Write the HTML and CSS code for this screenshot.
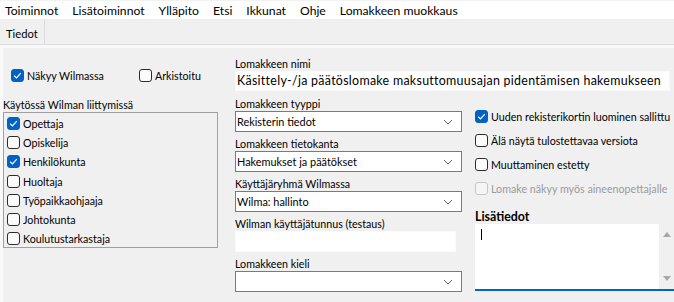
FILE: index.html
```html
<!DOCTYPE html>
<html lang="fi">
<head>
<meta charset="utf-8">
<title>Lomakkeen muokkaus</title>
<link rel="stylesheet" href="styles.css">
</head>
<body>
<div class="menubar">
  <span class="menu-item">Toiminnot</span>
  <span class="menu-item">Lisätoiminnot</span>
  <span class="menu-item">Ylläpito</span>
  <span class="menu-item">Etsi</span>
  <span class="menu-item">Ikkunat</span>
  <span class="menu-item">Ohje</span>
  <span class="menu-item">Lomakkeen muokkaus</span>
</div>
<div class="tabstrip">
  <div class="tab">Tiedot</div>
</div>
<div class="page-wrap">
  <div class="page">
    <div class="col-left">
      <div class="toprow">
        <label class="cb checked nakyy"><span class="box"><svg viewBox="0 0 13 13" width="13" height="13"><polyline points="3.2,6.8 5.5,9 9.8,4.2" fill="none" stroke="#fff" stroke-width="1.2"/></svg></span>Näkyy Wilmassa</label>
        <label class="cb"><span class="box"></span>Arkistoitu</label>
      </div>
      <div class="grouplabel">Käytössä Wilman liittymissä</div>
      <div class="listbox">
        <label class="cb checked"><span class="box"><svg viewBox="0 0 13 13" width="13" height="13"><polyline points="3.2,6.8 5.5,9 9.8,4.2" fill="none" stroke="#fff" stroke-width="1.2"/></svg></span>Opettaja</label>
        <label class="cb"><span class="box"></span>Opiskelija</label>
        <label class="cb checked"><span class="box"><svg viewBox="0 0 13 13" width="13" height="13"><polyline points="3.2,6.8 5.5,9 9.8,4.2" fill="none" stroke="#fff" stroke-width="1.2"/></svg></span>Henkilökunta</label>
        <label class="cb"><span class="box"></span>Huoltaja</label>
        <label class="cb"><span class="box"></span>Työpaikkaohjaaja</label>
        <label class="cb"><span class="box"></span>Johtokunta</label>
        <label class="cb"><span class="box"></span>Koulutustarkastaja</label>
      </div>
    </div>
    <div class="col-main">
      <div class="lbl first">Lomakkeen nimi</div>
      <div class="textinput wide">Käsittely-/ja päätöslomake maksuttomuusajan pidentämisen hakemukseen</div>
      <div class="cols">
        <div class="col-mid">
          <div class="lbl">Lomakkeen tyyppi</div>
          <div class="select"><span>Rekisterin tiedot</span><svg class="chev" viewBox="0 0 10 6" width="10" height="6"><polyline points="1,1 5,5 9,1" fill="none" stroke="#606060" stroke-width="1"/></svg></div>
          <div class="lbl">Lomakkeen tietokanta</div>
          <div class="select"><span>Hakemukset ja päätökset</span><svg class="chev" viewBox="0 0 10 6" width="10" height="6"><polyline points="1,1 5,5 9,1" fill="none" stroke="#606060" stroke-width="1"/></svg></div>
          <div class="lbl">Käyttäjäryhmä Wilmassa</div>
          <div class="select"><span>Wilma: hallinto</span><svg class="chev" viewBox="0 0 10 6" width="10" height="6"><polyline points="1,1 5,5 9,1" fill="none" stroke="#606060" stroke-width="1"/></svg></div>
          <div class="lbl">Wilman käyttäjätunnus (testaus)</div>
          <div class="textinput short"></div>
          <div class="lbl">Lomakkeen kieli</div>
          <div class="select"><span></span><svg class="chev" viewBox="0 0 10 6" width="10" height="6"><polyline points="1,1 5,5 9,1" fill="none" stroke="#606060" stroke-width="1"/></svg></div>
        </div>
        <div class="col-right">
          <label class="cb checked rrow"><span class="box"><svg viewBox="0 0 13 13" width="13" height="13"><polyline points="3.2,6.8 5.5,9 9.8,4.2" fill="none" stroke="#fff" stroke-width="1.2"/></svg></span>Uuden rekisterikortin luominen sallittu</label>
          <label class="cb rrow"><span class="box"></span>Älä näytä tulostettavaa versiota</label>
          <label class="cb rrow"><span class="box"></span>Muuttaminen estetty</label>
          <label class="cb rrow disabled"><span class="box"></span>Lomake näkyy myös aineenopettajalle</label>
          <div class="lbl bold">Lisätiedot</div>
          <div class="textarea">
            <div class="ta-body"><span class="caret"></span></div>
            <div class="scrollbar">
              <svg viewBox="0 0 8 5" width="8" height="5"><polygon points="0,5 4,0 8,5" fill="#a8a8a8"/></svg>
              <svg viewBox="0 0 8 5" width="8" height="5"><polygon points="0,0 8,0 4,5" fill="#a8a8a8"/></svg>
            </div>
          </div>
        </div>
      </div>
    </div>
  </div>
</div>
</body>
</html>
```
FILE: styles.css
```css
* { box-sizing: border-box; }
html, body { margin: 0; padding: 0; }
body {
  width: 674px;
  height: 302px;
  overflow: hidden;
  background: #f0f0f0;
  font-family: Lato, "Noto Sans", sans-serif;
  font-size: 10.7px;
  color: #000;
}
.menubar {
  height: 19px;
  background: #fff;
  border-top: 1px solid #f2f2f2;
  display: flex;
  align-items: center;
  padding-left: 5px;
  padding-top: 1px;
  gap: 14px;
  white-space: nowrap;
  font-size: 12.2px;
}
.tabstrip {
  height: 26px;
  background: #f0f0f0;
  border-bottom: 1px solid #dcdcdc;
  display: flex;
  align-items: stretch;
  font-size: 11.2px;
}
.tab {
  width: 45px;
  padding-left: 6px;
  padding-top: 4px;
  display: flex;
  align-items: center;
  border-right: 1px solid #dcdcdc;
}
.page-wrap {
  background: #f9f9f9;
  padding: 3px 0 0 3px;
  height: 257px;
}
.page {
  background: #f0f0f0;
  height: 100%;
  display: flex;
  align-items: flex-start;
}
.col-left {
  width: 215px;
  flex: none;
}
.toprow {
  display: flex;
  padding-top: 20px;
  padding-left: 8px;
}
.toprow .cb { height: 15px; }
.toprow .nakyy { width: 128px; }
.cb {
  display: flex;
  align-items: center;
  white-space: nowrap;
}
.box {
  width: 13px;
  height: 13px;
  border: 1px solid #2b2b2b;
  border-radius: 3px;
  background: #fbfbfb;
  margin-right: 3px;
  flex: none;
  display: flex;
}
.box svg { display: block; margin: -1px; }
.cb.checked .box {
  background: #0062c4;
  border-color: #0062c4;
}
.cb.disabled { color: #9a9a9a; }
.cb.disabled .box { border-color: #c6c6c6; background: #f5f5f5; }
.grouplabel {
  margin-top: 15px;
  line-height: 14px;
  height: 14px;
  white-space: nowrap;
}
.listbox {
  border: 1px solid #a0a0a0;
  height: 136px;
  padding: 1px 0 0 3px;
}
.listbox .cb { height: 19.2px; }
.col-main {
  margin-left: 17px;
  flex: 1;
  padding-top: 9px;
}
.lbl {
  line-height: 15px;
  height: 15px;
  white-space: nowrap;
}
.lbl.first { line-height: 14px; height: 14px; }
.textinput {
  background: #fff;
  height: 20px;
  border: 1px solid #fafafa;
  padding-left: 1px;
  line-height: 18px;
  white-space: nowrap;
  overflow: hidden;
}
.textinput.wide { width: 435px; margin-bottom: 5px; font-size: 12.4px; letter-spacing: 0.3px; }
.textinput.short { width: 221px; height: 21px; margin-bottom: 4px; }
.cols {
  display: flex;
  align-items: flex-start;
}
.col-mid { width: 227px; flex: none; }
.select {
  height: 21px;
  background: #fff;
  border: 1px solid #7a7a7a;
  display: flex;
  align-items: center;
  justify-content: space-between;
  padding: 0 8px 0 1px;
  margin-bottom: 4px;
  font-size: 10.9px;
}
.chev { display: block; }
.col-right {
  margin-left: 13px;
  flex: 1;
  padding-top: 8px;
  overflow: hidden;
}
.rrow { height: 24px; }
.bold { font-weight: bold; margin-top: 9px; font-size: 12.4px; }
.textarea {
  height: 67px;
  background: #fff;
  border-bottom: 2px solid #0067c0;
  display: flex;
}
.ta-body { flex: 1; padding: 5px 0 0 6px; }
.caret {
  display: block;
  width: 1px;
  height: 11px;
  background: #000;
}
.scrollbar {
  width: 15px;
  flex: none;
  background: #f0f0f0;
  display: flex;
  flex-direction: column;
  align-items: center;
  justify-content: space-between;
  padding: 8px 0 8px;
}
.scrollbar svg { display: block; }
```
